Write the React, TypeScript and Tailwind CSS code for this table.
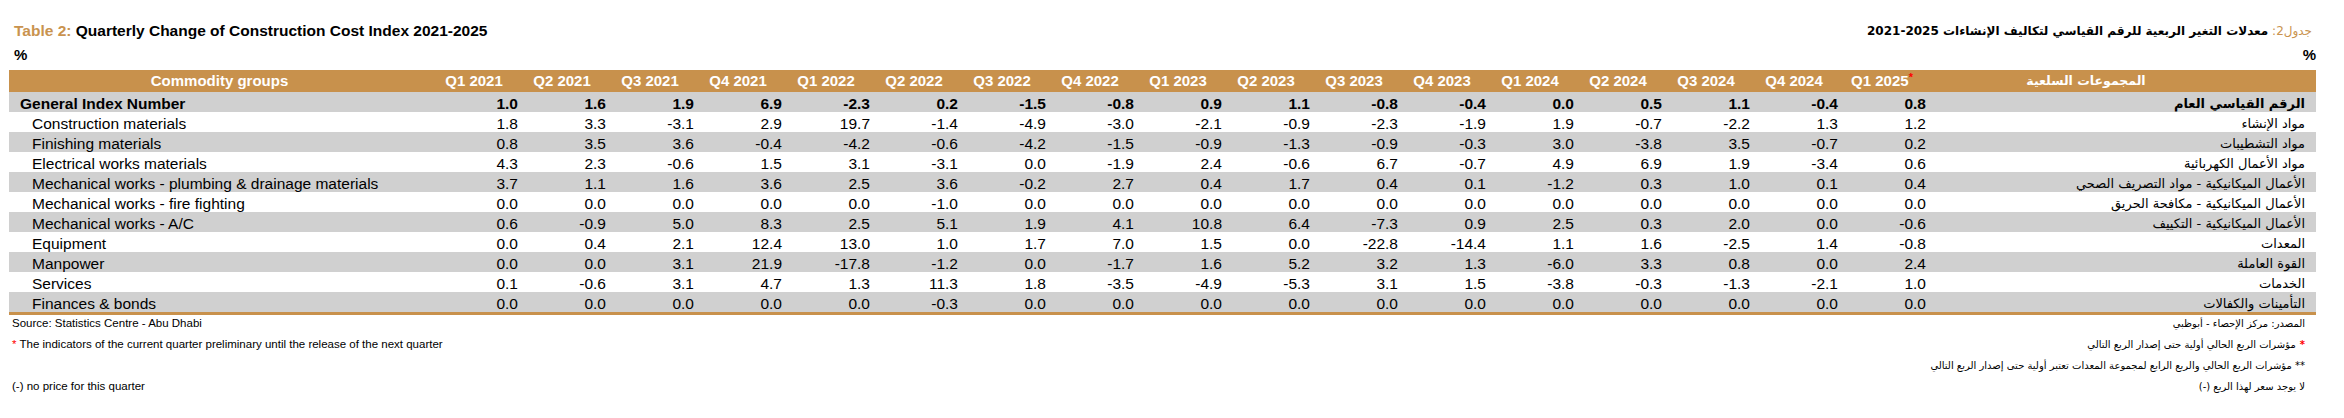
const QUARTERS = [
  'Q1 2021', 'Q2 2021', 'Q3 2021', 'Q4 2021',
  'Q1 2022', 'Q2 2022', 'Q3 2022', 'Q4 2022',
  'Q1 2023', 'Q2 2023', 'Q3 2023', 'Q4 2023',
  'Q1 2024', 'Q2 2024', 'Q3 2024', 'Q4 2024',
];

const ROWS = [
  { en: 'General Index Number', ar: 'الرقم القياسي العام', bold: true, v: ['1.0', '1.6', '1.9', '6.9', '-2.3', '0.2', '-1.5', '-0.8', '0.9', '1.1', '-0.8', '-0.4', '0.0', '0.5', '1.1', '-0.4', '0.8'] },
  { en: 'Construction materials', ar: 'مواد الإنشاء', v: ['1.8', '3.3', '-3.1', '2.9', '19.7', '-1.4', '-4.9', '-3.0', '-2.1', '-0.9', '-2.3', '-1.9', '1.9', '-0.7', '-2.2', '1.3', '1.2'] },
  { en: 'Finishing materials', ar: 'مواد التشطيبات', v: ['0.8', '3.5', '3.6', '-0.4', '-4.2', '-0.6', '-4.2', '-1.5', '-0.9', '-1.3', '-0.9', '-0.3', '3.0', '-3.8', '3.5', '-0.7', '0.2'] },
  { en: 'Electrical works materials', ar: 'مواد الأعمال الكهربائية', v: ['4.3', '2.3', '-0.6', '1.5', '3.1', '-3.1', '0.0', '-1.9', '2.4', '-0.6', '6.7', '-0.7', '4.9', '6.9', '1.9', '-3.4', '0.6'] },
  { en: 'Mechanical works - plumbing & drainage materials', ar: 'الأعمال الميكانيكية - مواد التصريف الصحي', v: ['3.7', '1.1', '1.6', '3.6', '2.5', '3.6', '-0.2', '2.7', '0.4', '1.7', '0.4', '0.1', '-1.2', '0.3', '1.0', '0.1', '0.4'] },
  { en: 'Mechanical works - fire fighting', ar: 'الأعمال الميكانيكية - مكافحة الحريق', v: ['0.0', '0.0', '0.0', '0.0', '0.0', '-1.0', '0.0', '0.0', '0.0', '0.0', '0.0', '0.0', '0.0', '0.0', '0.0', '0.0', '0.0'] },
  { en: 'Mechanical works - A/C', ar: 'الأعمال الميكانيكية - التكييف', v: ['0.6', '-0.9', '5.0', '8.3', '2.5', '5.1', '1.9', '4.1', '10.8', '6.4', '-7.3', '0.9', '2.5', '0.3', '2.0', '0.0', '-0.6'] },
  { en: 'Equipment', ar: 'المعدات', v: ['0.0', '0.4', '2.1', '12.4', '13.0', '1.0', '1.7', '7.0', '1.5', '0.0', '-22.8', '-14.4', '1.1', '1.6', '-2.5', '1.4', '-0.8'] },
  { en: 'Manpower', ar: 'القوة العاملة', v: ['0.0', '0.0', '3.1', '21.9', '-17.8', '-1.2', '0.0', '-1.7', '1.6', '5.2', '3.2', '1.3', '-6.0', '3.3', '0.8', '0.0', '2.4'] },
  { en: 'Services', ar: 'الخدمات', v: ['0.1', '-0.6', '3.1', '4.7', '1.3', '11.3', '1.8', '-3.5', '-4.9', '-5.3', '3.1', '1.5', '-3.8', '-0.3', '-1.3', '-2.1', '1.0'] },
  { en: 'Finances & bonds', ar: 'التأمينات والكفالات', v: ['0.0', '0.0', '0.0', '0.0', '0.0', '-0.3', '0.0', '0.0', '0.0', '0.0', '0.0', '0.0', '0.0', '0.0', '0.0', '0.0', '0.0'] },
];

const AR = "font-['DejaVu_Sans',sans-serif]";

export default function App() {
  return (
    <div className="w-[2344px] h-[418px] bg-white text-black font-['Liberation_Sans',Arial,sans-serif]">
      {/* Titles */}
      <div className="flex justify-between items-center pt-[22px] pl-[14px] pr-[32px] h-[40px]">
        <div className="text-[15.5px] font-bold leading-[18px]">
          <span className="text-[#c9934f]">Table 2: </span>
          Quarterly Change of Construction Cost Index 2021-2025
        </div>
        <div dir="rtl" className={`${AR} text-[12px] font-bold leading-[18px]`}>
          <span className="text-[#c9934f] font-normal">جدول2: </span>
          معدلات التغير الربعية للرقم القياسي لتكاليف الإنشاءات 2025-2021
        </div>
      </div>
      <div className="flex justify-between items-center h-[30px] pl-[14px] pr-[28px] text-[15px] font-bold">
        <span>%</span>
        <span>%</span>
      </div>

      {/* Table */}
      <div className="ml-[9px] w-[2307px]">
        <div className="grid grid-cols-[421px_repeat(17,88px)_1fr] h-[22px] items-center bg-[#c8914c] text-white font-bold text-[15px]">
          <div className="text-center">Commodity groups</div>
          {QUARTERS.map(q => (
            <div key={q} className="text-center">{q}</div>
          ))}
          <div className="text-center">
            Q1 2025<sup className="text-[#ff0000] text-[11px]">*</sup>
          </div>
          <div dir="rtl" className={`${AR} text-center text-[12.5px] pr-[70px]`}>المجموعات السلعية</div>
        </div>

        {ROWS.map((r, i) => (
          <div
            key={r.en}
            className={`grid grid-cols-[421px_repeat(17,88px)_1fr] h-[20px] items-center text-[15.5px] ${i % 2 === 0 ? 'bg-[#d0d0d0]' : 'bg-white'} ${r.bold ? 'font-bold' : ''}`}
          >
            <div className={r.bold ? 'pl-[11px]' : 'pl-[23px]'}>{r.en}</div>
            {r.v.map((v, j) => (
              <div key={j} className="text-right">{v}</div>
            ))}
            <div dir="rtl" className={`${AR} pr-[11px] text-[13px] whitespace-nowrap`}>{r.ar}</div>
          </div>
        ))}
        <div className="h-[3px] bg-[#c8914c]" />
      </div>

      {/* Notes */}
      <div className="flex justify-between -mt-[2px] pl-[12px] pr-[39px] text-[11.5px]">
        <div className="flex flex-col">
          <div className="h-[21px] flex items-center">Source: Statistics Centre - Abu Dhabi</div>
          <div className="h-[21px] flex items-center">
            <span className="text-[#ff0000] mr-[3px]">*</span>
            The indicators of the current quarter preliminary until the release of the next quarter
          </div>
          <div className="h-[21px]" />
          <div className="h-[21px] flex items-center">(-) no price for this quarter</div>
        </div>
        <div dir="rtl" className={`${AR} flex flex-col text-[10px]`}>
          <div className="h-[21px] flex items-center">المصدر: مركز الإحصاء - أبوظبي</div>
          <div className="h-[21px] flex items-center">
            <span className="text-[#ff0000] ml-[4px] font-bold">*</span>
            مؤشرات الربع الحالي أولية حتى إصدار الربع التالي
          </div>
          <div className="h-[21px] flex items-center">
            ** مؤشرات الربع الحالي والربع الرابع لمجموعة المعدات  تعتبر أولية حتى إصدار الربع التالي
          </div>
          <div className="h-[21px] flex items-center">لا يوجد سعر لهذا الربع (-)</div>
        </div>
      </div>
    </div>
  );
}
